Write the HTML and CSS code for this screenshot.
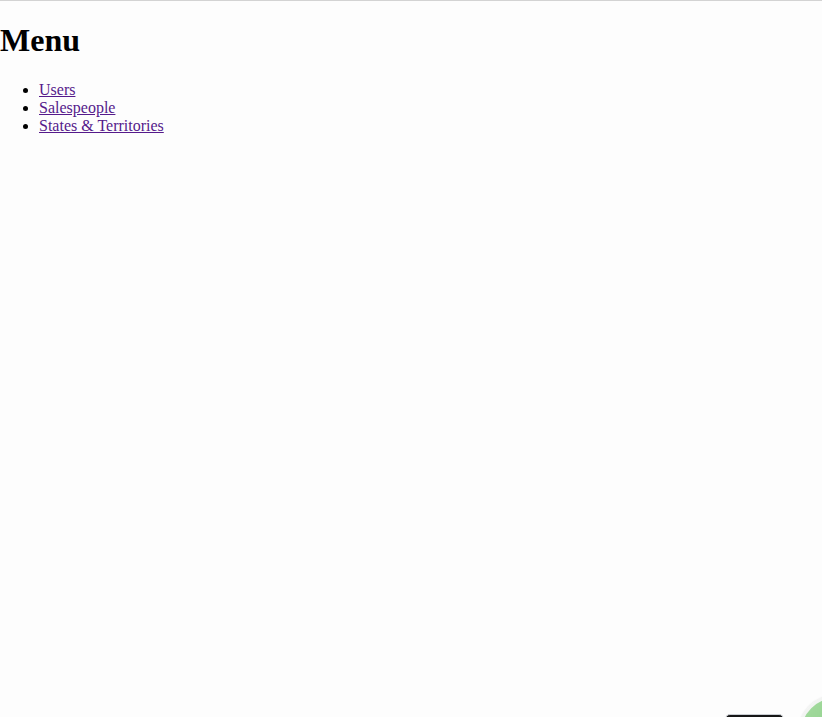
FILE: index.html
```html
<!DOCTYPE html>
<html>
<head>
<meta charset="utf-8">
<title>Menu</title>
<link rel="stylesheet" href="styles.css">
</head>
<body>
<div class="page">
  <h1 class="title">Menu</h1>
  <ul class="menu">
    <li><a class="link" href="#users">Users</a></li>
    <li><a class="link" href="#salespeople">Salespeople</a></li>
    <li><a class="link" href="#states">States &amp; Territories</a></li>
  </ul>
</div>
<div class="dock-bar"></div>
<div class="dock-orb"></div>
</body>
</html>
```
FILE: styles.css
```css
html, body {
  margin: 0;
  padding: 0;
  height: 100%;
  background: #fdfdfd;
}
body {
  font-family: "Liberation Serif", "Times New Roman", serif;
  font-size: 16px;
  color: #000;
  overflow: hidden;
}
.page {
  border-top: 1px solid #d3d3d3;
  min-height: 100%;
  box-sizing: border-box;
}
.title {
  font-size: 32px;
  font-weight: bold;
  margin: 21px 0 22px 0;
}
.menu {
  margin: 16px 0;
  padding-left: 39px;
  list-style: disc;
}
.link {
  color: #551a8b;
  text-decoration: underline;
}
.dock-bar {
  position: fixed;
  left: 725px;
  top: 714px;
  width: 59px;
  height: 20px;
  box-sizing: border-box;
  background: #161616;
  border: 1px solid #c9cdd2;
  border-radius: 5px;
}
.dock-orb {
  position: fixed;
  left: 798px;
  top: 695px;
  width: 76px;
  height: 76px;
  box-sizing: border-box;
  border-radius: 50%;
  border: 3px solid #f2f4f2;
  background: linear-gradient(135deg, #a5dba0, #7fc97a);
  box-shadow: 0 0 2px rgba(0,0,0,0.15);
}
```
